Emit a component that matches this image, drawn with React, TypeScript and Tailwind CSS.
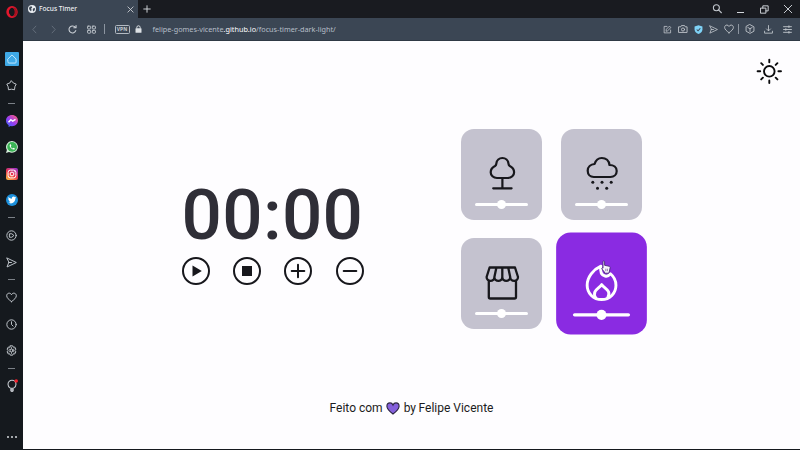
import type { ReactNode } from 'react';

type IconProps = { size?: number; w?: number; children: ReactNode; className?: string };

/** Thin outlined icon on a 16 unit grid. */
function Line({ size = 11, w = 1.4, children, className = 'text-[#c3c8ce]' }: IconProps) {
  return (
    <svg width={size} height={size} viewBox="0 0 16 16" fill="none" stroke="currentColor" strokeWidth={w} strokeLinecap="round" strokeLinejoin="round" className={`shrink-0 ${className}`}>
      {children}
    </svg>
  );
}

function Slot({ h, children }: { h: string; children: ReactNode }) {
  return <div className={`flex w-full shrink-0 items-center justify-center ${h}`}>{children}</div>;
}

function Divider({ h }: { h: string }) {
  return (
    <Slot h={h}>
      <span className="h-px w-[7px] bg-[#7b8087]" />
    </Slot>
  );
}

const heart = 'M8 14 C4 11 1 8.5 1 5.4 C1 3.2 2.7 1.7 4.6 1.7 C6.2 1.7 7.4 2.6 8 4 C8.6 2.6 9.8 1.7 11.4 1.7 C13.3 1.7 15 3.2 15 5.4 C15 8.5 12 11 8 14 Z';
const send = 'M1.5 1.5 L15 8 L1.5 14.5 L4 8 Z M4 8 H8';

function Sidebar() {
  return (
    <aside className="flex h-[450px] w-[23px] shrink-0 flex-col items-center bg-[#15191e]">
      <Slot h="h-6">
        <svg width="12" height="12" viewBox="0 0 12 12">
          <ellipse cx="6" cy="6" rx="4.4" ry="4.6" fill="none" stroke="#e3172d" strokeWidth="2.6" />
          <ellipse cx="6" cy="6" rx="2.3" ry="4.2" fill="#15191e" />
          <path d="M7.3 1.2 C12.5 2 12.5 10 7.3 10.8 C9 8.5 9 3.5 7.3 1.2 Z" fill="#a51220" />
        </svg>
      </Slot>
      <div className="h-[22px] shrink-0" />
      <Slot h="h-[26px]">
        <span className="flex h-[14px] w-[14px] items-center justify-center rounded-[1px] bg-[#3fa9e6]">
          <Line size={10} w={1.5} className="text-[#c9ebff]">
            <path d="M1.5 8 L8 1.5 L14.5 8 V13 Q14.5 14.5 13 14.5 H3 Q1.5 14.5 1.5 13 Z" />
          </Line>
        </span>
      </Slot>
      <Slot h="h-[26px]">
        <Line>
          <path d="M8 1.3 L10.6 4.3 L14.8 6 L12.9 9.8 L12.4 14.2 L8 13.4 L3.6 14.2 L3.1 9.8 L1.2 6 L5.4 4.3 Z" />
        </Line>
      </Slot>
      <Divider h="h-[10px]" />
      <Slot h="h-[26px]">
        <svg width="12" height="12" viewBox="0 0 12 12">
          <defs>
            <linearGradient id="msg" x1="0" y1="1" x2="0.9" y2="0">
              <stop offset="0" stopColor="#2f6bff" />
              <stop offset="0.5" stopColor="#9a3df0" />
              <stop offset="1" stopColor="#ff5f7a" />
            </linearGradient>
          </defs>
          <path d="M6 0 C9.4 0 12 2.4 12 5.6 C12 8.8 9.4 11.3 6 11.3 L4.5 11.1 L2.6 12 V10.2 C1 9.2 0 7.6 0 5.6 C0 2.4 2.6 0 6 0 Z" fill="url(#msg)" />
          <path d="M2.5 7.3 L4.9 4.7 L6.7 6.2 L9.5 4.3" stroke="white" strokeWidth="1.4" fill="none" />
        </svg>
      </Slot>
      <Slot h="h-[26px]">
        <svg width="12" height="12" viewBox="0 0 12 12">
          <path d="M6.1 0 A5.9 5.9 0 1 1 3 11 L0 12 L0.9 8.9 A5.9 5.9 0 0 1 6.1 0 Z" fill="#d6eedb" />
          <circle cx="6.1" cy="5.9" r="4.9" fill="#3bb556" />
          <path d="M4.2 3.2 C3 4.5 4 6.3 5.3 7.4 C6.6 8.5 8.2 9.2 9 7.7 L7.5 6.8 L6.8 7.5 C5.8 7 5.2 6.4 4.8 5.4 L5.3 4.6 L4.8 3.2 Z" fill="white" />
        </svg>
      </Slot>
      <Slot h="h-[27px]">
        <svg width="12" height="12" viewBox="0 0 12 12">
          <defs>
            <linearGradient id="ig" x1="0.2" y1="1" x2="0.8" y2="0">
              <stop offset="0" stopColor="#fbb040" />
              <stop offset="0.5" stopColor="#e8344e" />
              <stop offset="1" stopColor="#9b35c8" />
            </linearGradient>
          </defs>
          <rect width="12" height="12" rx="2" fill="url(#ig)" />
          <rect x="2.1" y="2.1" width="7.8" height="7.8" rx="2.2" fill="none" stroke="white" strokeWidth="1" />
          <circle cx="6" cy="6" r="1.9" fill="none" stroke="white" strokeWidth="1" />
          <circle cx="8.3" cy="3.7" r="0.5" fill="white" />
        </svg>
      </Slot>
      <Slot h="h-[26px]">
        <svg width="12" height="12" viewBox="0 0 12 12">
          <circle cx="6" cy="6" r="6" fill="#1c90dc" />
          <path d="M2.5 3 C3.4 4.1 4.6 4.7 5.9 4.7 C5.7 3.3 6.7 2.6 7.6 2.6 C8.2 2.6 8.6 2.8 8.9 3.2 L10 2.8 L9.5 3.8 L10.1 3.8 L9.3 4.6 C9.4 7.6 7.2 9.4 4.9 9.4 C3.9 9.4 3 9.1 2.2 8.6 C3.2 8.6 3.9 8.4 4.5 8 C3.7 7.8 3.2 7.4 3 6.8 L3.6 6.7 C2.8 6.4 2.3 5.8 2.3 5 L2.9 5.2 C2.2 4.5 2.2 3.7 2.5 3 Z" fill="white" />
        </svg>
      </Slot>
      <Divider h="h-[9px]" />
      <Slot h="h-[27px]">
        <Line>
          <circle cx="8" cy="8" r="6.8" />
          <path d="M5.5 5.5 H8.5 L11.5 8 L8.5 10.5 H5.5 Z" />
        </Line>
      </Slot>
      <Slot h="h-[26px]">
        <Line>
          <path d={send} />
        </Line>
      </Slot>
      <Divider h="h-[9px]" />
      <Slot h="h-[27px]">
        <Line>
          <path d={heart} />
        </Line>
      </Slot>
      <Slot h="h-[26px]">
        <Line>
          <circle cx="8" cy="8" r="6.8" />
          <path d="M8 4 V8 L10.3 10.3" />
        </Line>
      </Slot>
      <Slot h="h-[27px]">
        <Line>
          <path d="M6.3 1.2 H9.7 L10.5 3.2 L12.7 3 L14.4 6 L13 8 L14.4 10 L12.7 13 L10.5 12.8 L9.7 14.8 H6.3 L5.5 12.8 L3.3 13 L1.6 10 L3 8 L1.6 6 L3.3 3 L5.5 3.2 Z" />
          <circle cx="8" cy="8" r="2.2" />
          <path d="M8 3.5 V5.5 M8 10.5 V12.5 M4 5.7 L6 6.8 M12 5.7 L10 6.8 M4 10.3 L6 9.2 M12 10.3 L10 9.2" strokeWidth="1" />
        </Line>
      </Slot>
      <Divider h="h-[8px]" />
      <Slot h="h-[28px]">
        <svg width="12" height="14" viewBox="0 0 12 14" fill="none">
          <path d="M4.3 9 C2.7 8.2 2 6.8 2 5.2 C2 3 3.8 1.3 6 1.3 S10 3 10 5.2 C10 6.8 9.3 8.2 7.7 9" stroke="#c3c8ce" strokeWidth="1.1" />
          <path d="M4.2 8.7 H7.8 V11.5 L7 13 H5 L4.2 11.5 Z" fill="#b3b7bd" />
          <circle cx="10.2" cy="2" r="1.8" fill="#f4202c" />
        </svg>
      </Slot>
      <div className="mt-auto flex h-[26px] items-center gap-[2px]">
        <span className="size-[2px] rounded-full bg-[#d5d8dc]" />
        <span className="size-[2px] rounded-full bg-[#d5d8dc]" />
        <span className="size-[2px] rounded-full bg-[#d5d8dc]" />
      </div>
    </aside>
  );
}

function TabBar() {
  return (
    <div className="flex h-[18px] items-center bg-[#191b20] text-[#d3d7dc]">
      <div className="flex h-full w-[115px] items-center bg-[#3b4654] pr-[4px] pl-[5px]">
        <svg width="8" height="8" viewBox="0 0 16 16" className="shrink-0">
          <circle cx="8" cy="8" r="8" fill="#e9edf1" />
          <path d="M3 3.5 L7 2.5 L8.5 5 L6 7.5 L7.5 10 L5.5 12.5 L2 8 Z M10 7 L14 6 L13.5 10.5 L10.5 13 L9.5 10 Z" fill="#3b4654" />
        </svg>
        <span className="ml-[3px] pt-px font-['Noto_Sans'] text-[6.6px] leading-none font-medium whitespace-nowrap text-[#eef0f3]">Focus Timer</span>
        <Line size={7} w={1.9} className="ml-auto text-[#d3d7dc]">
          <path d="M2 2 L14 14 M14 2 L2 14" />
        </Line>
      </div>
      <Line size={8} w={1.9} className="ml-[5px] text-[#d3d7dc]">
        <path d="M8 1.5 V14.5 M1.5 8 H14.5" />
      </Line>
      <div className="ml-auto flex items-center pr-[7px]">
        <Line size={10} w={1.7}>
          <circle cx="7" cy="6" r="4.8" />
          <path d="M10.5 9.5 L15 14" />
        </Line>
        <span className="mt-[7px] ml-[15px] h-px w-[7px] bg-[#d3d7dc]" />
        <Line size={9} w={1.7} className="ml-[16px] text-[#d3d7dc]">
          <path d="M1.5 5.5 H10.5 V14.5 H1.5 Z M5 5.5 V1.5 H14.5 V10.5 H10.5" strokeLinejoin="miter" />
        </Line>
        <Line size={10} w={1.5} className="ml-[14px] text-[#d3d7dc]">
          <path d="M2 2 L14 14 M14 2 L2 14" />
        </Line>
      </div>
    </div>
  );
}

function AddressBar() {
  return (
    <div className="flex h-[23px] items-center border-b border-[#2f3945] bg-[#3b4654]">
      <Line size={9} className="ml-[6.5px] text-[#6c7683]">
        <path d="M10.5 2 L5 8 L10.5 14" />
      </Line>
      <Line size={9} className="ml-[10px] text-[#6c7683]">
        <path d="M5.5 2 L11 8 L5.5 14" />
      </Line>
      <Line size={9} w={1.9} className="ml-[10px] text-[#cdd2d8]">
        <path d="M13.8 10 A6.2 6.2 0 1 1 13 4.2" />
        <path d="M14.3 1 V5 H10.3" />
      </Line>
      <Line size={9} w={1.7} className="ml-[10px] text-[#bfc5cc]">
        <rect x="1" y="2" width="5.5" height="5" rx="1" />
        <rect x="9.5" y="2" width="5.5" height="5" rx="1" />
        <rect x="1" y="9.5" width="5.5" height="5" rx="1" />
        <rect x="9.5" y="9.5" width="5.5" height="5" rx="1" />
      </Line>
      <span className="ml-[8px] h-[10px] w-px bg-[#8c95a0]" />
      <span className="ml-[10px] flex h-[9px] w-[15px] items-center justify-center rounded-[1.5px] border border-[#b3bac2] font-['Noto_Sans'] text-[5px] leading-none font-bold text-[#c6ccd2]">VPN</span>
      <svg width="7" height="8" viewBox="0 0 7 8" className="ml-[5px]">
        <path d="M1.8 3.5 V2.5 A1.7 1.7 0 0 1 5.2 2.5 V3.5" fill="none" stroke="#dde1e5" strokeWidth="1" />
        <rect x="0.5" y="3.3" width="6" height="4.5" rx="0.5" fill="#dde1e5" />
      </svg>
      <span className="ml-[11px] pt-px font-['Noto_Sans'] text-[7.25px] leading-none whitespace-nowrap text-[#b6bec8]">
        felipe-gomes-vicente<span className="text-[#ffffff]">.github.io</span>/focus-timer-dark-light/
      </span>
      <div className="ml-auto flex items-center pr-[8px]">
        <Line size={9}>
          <path d="M7 2.5 H2 V14 H13.5 V9 M5.5 10.5 L6 7.5 L11.5 2 L14 4.5 L8.5 10 Z" />
        </Line>
        <Line size={10} className="ml-[6px] text-[#c3c8ce]">
          <path d="M1.5 4.5 H4.5 L5.5 2.5 H10.5 L11.5 4.5 H14.5 V13.5 H1.5 Z" />
          <circle cx="8" cy="8.8" r="2.5" />
        </Line>
        <svg width="9" height="9" viewBox="0 0 16 16" className="ml-[6px]">
          <path d="M8 0.5 L15 2.5 V8 C15 12 12 14.5 8 15.8 C4 14.5 1 12 1 8 V2.5 Z" fill="#7fd3f7" />
          <path d="M4.8 8 L7.2 10.3 L11.3 5.8" stroke="#3b4654" strokeWidth="1.8" fill="none" />
        </svg>
        <Line size={9} className="ml-[6px] text-[#c3c8ce]">
          <path d={send} />
        </Line>
        <Line size={10} className="ml-[6px] text-[#c3c8ce]">
          <path d={heart} />
        </Line>
        <span className="ml-[4px] h-[10px] w-px bg-[#8c95a0]" />
        <Line size={10} className="ml-[6px] text-[#c3c8ce]">
          <path d="M8 1 L14.3 4.5 V11.5 L8 15 L1.7 11.5 V4.5 Z M4.5 5.5 L8 7.5 L11.5 5.5 M8 7.5 V12" />
        </Line>
        <Line size={9} w={1.5} className="ml-[9px] text-[#c3c8ce]">
          <path d="M8 1 V10 M4.5 7 L8 10.5 L11.5 7 M1 11 V14.5 H15 V11" />
        </Line>
        <Line size={9} w={1.6} className="ml-[10px] text-[#c3c8ce]">
          <path d="M1 3 H15 M1 8 H15 M1 13 H15 M10.5 1.5 V4.5 M5 6.5 V9.5 M10.5 11.5 V14.5" />
        </Line>
      </div>
    </div>
  );
}

function SoundCard({ active = false, children }: { active?: boolean; children: ReactNode }) {
  return (
    <div className={`flex h-[91px] w-[81px] flex-col items-center rounded-[13px] pt-[26px] ${active ? 'scale-[1.12] bg-[#8a2be2] text-white' : 'bg-[#c4c2cf] text-[#17171c]'}`}>
      <svg width="36" height="36" viewBox="0 0 36 36" fill="none" stroke="currentColor" strokeWidth={active ? 2.6 : 2.2} strokeLinecap="round" strokeLinejoin="round">
        {children}
      </svg>
      <div className={`flex h-[9px] items-center justify-center rounded-full ${active ? 'mt-[7px] w-[51px]' : 'mt-[8.5px] w-[53px]'}`}>
        <span className="h-[3px] flex-1 rounded-l-full bg-white" />
        <span className="-mx-px size-[9px] rounded-full bg-white" />
        <span className="h-[3px] flex-1 rounded-r-full bg-white" />
      </div>
    </div>
  );
}

function RoundButton({ children }: { children: ReactNode }) {
  return (
    <button className="size-7">
      <svg width="28" height="28" viewBox="0 0 28 28" fill="none" stroke="#17171c" strokeWidth="2" strokeLinecap="round">
        <circle cx="14" cy="14" r="13" />
        {children}
      </svg>
    </button>
  );
}

function Cursor() {
  return (
    <svg width="10" height="14" viewBox="0 0 10 14" className="absolute top-[219px] left-[578px]">
      <path d="M2 1.7 C2 0.7 3.600 0.7 3.600 1.7 V5.300 L8 6.200 C8.900 6.400 9.200 7 9.100 7.800 L8.500 11 L7.800 13.200 H3.700 L3.200 11.800 L0.900 9 C0.400 8.100 1.200 7.500 2 8.200 Z" fill="#f8f4fc" stroke="#4a2a78" strokeWidth="0.9" />
      <path d="M4.800 8.700 V11.200 M6.400 8.700 V11.200" stroke="#5b3b80" strokeWidth="0.6" />
    </svg>
  );
}

export default function App() {
  return (
    <div className="flex h-[450px] w-[800px] overflow-hidden bg-[#15191e]">
      <Sidebar />
      <div className="flex min-w-0 flex-1 flex-col">
        <TabBar />
        <AddressBar />
        <main className="relative flex h-[408px] flex-col bg-[#fefdff] font-[Roboto,sans-serif]">
          <header className="flex justify-end pt-[17px] pr-[18px]">
            <svg width="26" height="26" viewBox="0 0 26 26" fill="none" stroke="#0b0b0d" strokeWidth="1.9" strokeLinecap="round">
              <circle cx="13.3" cy="13.3" r="5.3" />
              <path d="M13.3 1.6 V4.2 M13.3 22.4 V25 M1.6 13.3 H4.2 M22.4 13.3 H25 M5.2 5.2 L6.9 6.9 M19.7 19.7 L21.4 21.4 M5.2 21.4 L6.9 19.7 M19.7 6.9 L21.4 5.2" />
            </svg>
          </header>
          <div className="mt-[45px] flex items-start pl-[158.6px]">
            <section className="w-[183px] pt-[50px]">
              <div className="text-[71px] leading-[72px] font-medium tracking-[0.3px] whitespace-nowrap text-[#2f2e37]">00:00</div>
              <div className="mt-[5.5px] flex gap-[23.4px]">
                <RoundButton>
                  <path d="M10.5 8.6 L19.8 14 L10.5 19.4 Z" fill="#17171c" stroke="none" />
                </RoundButton>
                <RoundButton>
                  <rect x="9" y="9" width="10" height="10" fill="#17171c" stroke="none" />
                </RoundButton>
                <RoundButton>
                  <path d="M14 7.7 V20.3 M7.7 14 H20.3" />
                </RoundButton>
                <RoundButton>
                  <path d="M7.7 14 H20.3" />
                </RoundButton>
              </div>
            </section>
            <section className="ml-[96.7px] grid grid-cols-[81px_81px] gap-x-[18.8px] gap-y-[18.3px]">
              <SoundCard>
                <path d="M13 23 C9.3 23 6.7 20.4 6.7 17.2 C6.7 14.3 8.6 12.3 11 11 C12.3 10.2 12.2 9.6 12.3 8.6 C12.7 5.3 15.2 3 18.4 3 S24.1 5.3 24.5 8.6 C24.6 9.6 24.5 10.2 25.8 11 C28.2 12.3 30.1 14.3 30.1 17.2 C30.1 20.4 27.5 23 23.8 23 Z M18.4 23 V33 M9.2 33.3 H27.6" />
              </SoundCard>
              <SoundCard>
                <path d="M9.8 22 C6.2 22 3.7 19.3 3.7 15.7 C3.7 11.8 6.7 9.3 10.6 9 C11.7 5.4 14.3 3 17.8 3 C22 3 25 5.8 25.5 10 C29.8 10 32.7 12.5 32.7 16 C32.7 19.5 30 22 26.5 22 Z" />
                <g fill="currentColor" stroke="none">
                  <circle cx="8.8" cy="27.3" r="1.5" />
                  <circle cx="18" cy="27.3" r="1.5" />
                  <circle cx="27.2" cy="27.3" r="1.5" />
                  <circle cx="13.5" cy="33.3" r="1.5" />
                  <circle cx="22.7" cy="33.3" r="1.5" />
                </g>
              </SoundCard>
              <SoundCard>
                <path d="M5.6 3.5 H31 L34 13 C34 18.2 26.2 18.2 26.2 13 C26.2 18.2 18.3 18.2 18.3 13 C18.3 18.2 10.4 18.2 10.4 13 C10.4 18.2 2.6 18.2 2.6 13 Z M12.4 3.5 L10.4 13 M18.3 3.5 V13 M24.2 3.5 L26.2 13 M4.8 17 V33 Q4.8 34.5 6.3 34.5 H30.5 Q32 34.5 32 33 V17" strokeWidth="2.3" />
              </SoundCard>
              <SoundCard active>
                <path d="M17 4 C10.2 7 4.7 13.5 4.7 21 C4.7 28.3 10.3 33.8 17.6 33.8 S30.4 28.3 30.4 21 C30.4 17 28.5 13.3 25.5 10.8 C24.2 12.6 22.7 13.3 20.7 12.8 C17.5 12 16.2 8.5 17 4 Z" />
                <path d="M12.2 32 C11.2 30.5 11 28.5 11.7 26.8 C12.9 24.2 16 22.8 17.7 20.5 C19.4 22.8 22.5 24.2 23.7 26.8 C24.4 28.5 24.1 30.5 23.1 32" />
              </SoundCard>
            </section>
          </div>
          <footer className="mt-auto mb-[33px] flex items-center justify-center text-[12px] leading-[16px] font-normal text-[#1c1c21]">
            <span>Feito com</span>
            <svg width="14" height="13" viewBox="0 0 14 13" className="mx-[3.5px]">
              <path d="M7 12 C3.5 9.3 0.9 7 0.9 4.2 C0.9 2.2 2.3 0.9 4 0.9 C5.4 0.9 6.5 1.7 7 3 C7.5 1.7 8.6 0.9 10 0.9 C11.7 0.9 13.1 2.2 13.1 4.2 C13.1 7 10.5 9.3 7 12 Z" fill="#8560dc" stroke="#2a2340" strokeWidth="1.1" />
            </svg>
            <span>by</span>
            <span className="-mt-[1px] ml-[2.5px]">Felipe Vicente</span>
          </footer>
          <Cursor />
        </main>
      </div>
    </div>
  );
}
